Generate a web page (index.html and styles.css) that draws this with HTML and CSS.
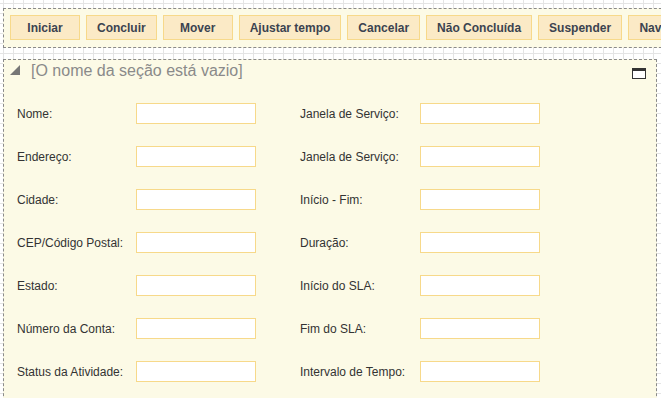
FILE: index.html
```html
<!DOCTYPE html>
<html lang="pt-BR">
  <head>
    <meta charset="UTF-8" />
    <meta name="viewport" content="width=device-width, initial-scale=1.0" />
    <title>Atividade</title>
    <link rel="stylesheet" href="styles.css">
  </head>
  <body>
    <div class="toolbar">
      <button class="tool-button">Iniciar</button>
      <button class="tool-button">Concluir</button>
      <button class="tool-button">Mover</button>
      <button class="tool-button">Ajustar tempo</button>
      <button class="tool-button">Cancelar</button>
      <button class="tool-button">Não Concluída</button>
      <button class="tool-button">Suspender</button>
      <button class="tool-button">Navegar</button>
    </div>

    <div class="section">
      <div class="section-header">
        <span class="collapse-icon"></span>
        <span class="section-title">[O nome da seção está vazio]</span>
        <span class="maximize-icon"></span>
      </div>

      <div class="form-grid">
        <label>Nome:</label>
        <input type="text" />
        <label>Janela de Serviço:</label>
        <input type="text" />

        <label>Endereço:</label>
        <input type="text" />
        <label>Janela de Serviço:</label>
        <input type="text" />

        <label>Cidade:</label>
        <input type="text" />
        <label>Início - Fim:</label>
        <input type="text" />

        <label>CEP/Código Postal:</label>
        <input type="text" />
        <label>Duração:</label>
        <input type="text" />

        <label>Estado:</label>
        <input type="text" />
        <label>Início do SLA:</label>
        <input type="text" />

        <label>Número da Conta:</label>
        <input type="text" />
        <label>Fim do SLA:</label>
        <input type="text" />

        <label>Status da Atividade:</label>
        <input type="text" />
        <label>Intervalo de Tempo:</label>
        <input type="text" />
      </div>
    </div>
  </body>
</html>
```

FILE: styles.css
```css
html {
  overflow: hidden;
}
body {
  margin: 0;
  font-family: "Liberation Sans", Arial, sans-serif;
  background-color: #fff;
  background-image: linear-gradient(#e4e4e4 1px, transparent 1px),
    linear-gradient(90deg, #e4e4e4 1px, transparent 1px);
  background-size: 10px 10px;
  background-position: 3px 3px;
  height: 398px;
}
.toolbar {
  display: flex;
  margin: 8px 0 0 3px;
  width: 720px;
  padding: 6px 6px 7px 6px;
  border: 1px dashed #8a8a8a;
  background-color: #fcfae6;
}
.tool-button {
  height: 25px;
  min-width: 70px;
  margin-right: 6px;
  padding: 0 10px;
  border: 1px solid #f7d98a;
  background-color: #fbeac6;
  color: #3b4350;
  font-family: "Liberation Sans", Arial, sans-serif;
  font-size: 12px;
  font-weight: bold;
  white-space: nowrap;
}
.section {
  margin: 11px 0 0 3px;
  width: 652px;
  height: 400px;
  border: 1px dashed #8a8a8a;
  background-color: #fcfae6;
}
.section-header {
  display: flex;
  align-items: flex-start;
  height: 32px;
  padding: 5px 0 0 6px;
  box-sizing: border-box;
}
.collapse-icon {
  width: 0;
  height: 0;
  margin-right: 11px;
  border-left: 10px solid transparent;
  border-bottom: 10px solid #777;
}
.section-title {
  flex: 1;
  margin-top: -3px;
  color: #8a8a8a;
  font-size: 16px;
}
.maximize-icon {
  width: 12px;
  height: 7px;
  margin: 3px 10px 0 0;
  border: 1px solid #333;
  border-top-width: 3px;
  background-color: #fff;
}
.form-grid {
  display: grid;
  grid-template-columns: 119px 164px 120px 120px;
  grid-auto-rows: 43px;
  align-items: center;
  padding-left: 13px;
}
.form-grid label {
  color: #333;
  font-size: 12px;
}
.form-grid input {
  width: 120px;
  height: 21px;
  box-sizing: border-box;
  border: 1px solid #f7d98a;
  background-color: #fff;
}
```
